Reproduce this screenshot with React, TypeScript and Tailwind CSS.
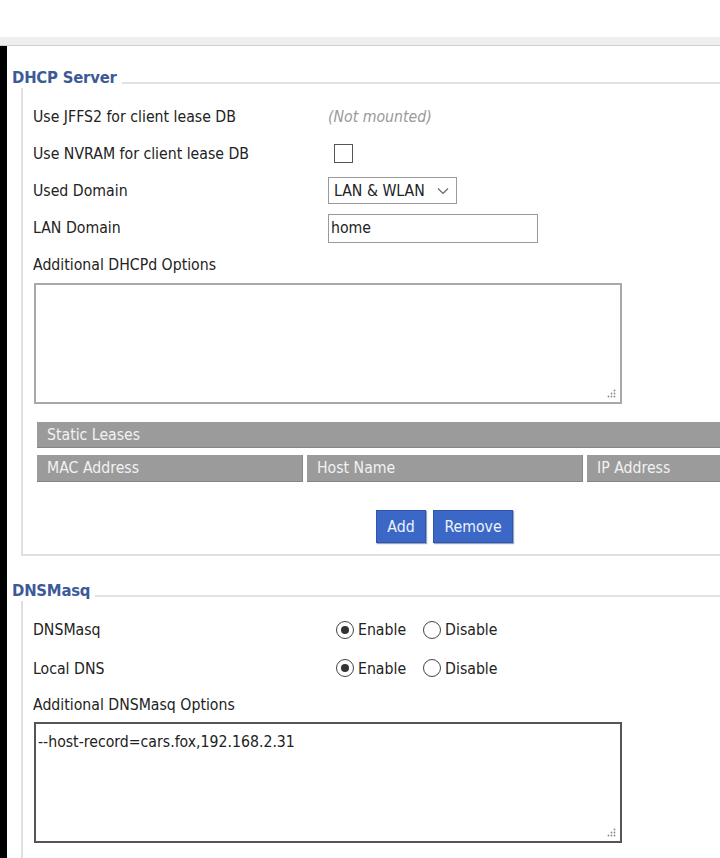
import React from "react";

const font = { fontFamily: '"DejaVu Sans Condensed", "Liberation Sans", sans-serif' };

const Grip: React.FC = () => (
	<svg
		className="absolute right-[4px] bottom-[4px]"
		width="9"
		height="9"
		viewBox="0 0 9 9"
	>
		{[
			[7.5, 1.5],
			[4.5, 4.5],
			[7.5, 4.5],
			[1.5, 7.5],
			[4.5, 7.5],
			[7.5, 7.5],
		].map(([cx, cy], i) => (
			<circle key={i} cx={cx} cy={cy} r="0.9" fill="#888" />
		))}
	</svg>
);

const Legend: React.FC<{ title: string }> = ({ title }) => (
	<div className="flex h-[18px]">
		<span className="text-[16.5px] font-bold leading-[18px] tracking-[-0.2px] text-[#3d5a98]">
			{title}
		</span>
		<div className="ml-[5px] mt-[13px] h-[2px] flex-1 bg-[#e2e2e2]"></div>
	</div>
);

const Row: React.FC<{ label: string; h: string; children?: React.ReactNode }> = ({
	label,
	h,
	children,
}) => (
	<div className={`flex items-center ${h}`}>
		<div className="w-[295px] shrink-0">{label}</div>
		<div className="flex items-center">{children}</div>
	</div>
);

const Radio: React.FC<{ on?: boolean; label: string }> = ({ on, label }) => (
	<div className="flex items-center gap-[4px]">
		<span className="flex h-[18px] w-[18px] items-center justify-center rounded-full border-[1.5px] border-[#444] bg-white">
			{on && <span className="h-[8px] w-[8px] rounded-full bg-[#333]"></span>}
		</span>
		<span>{label}</span>
	</div>
);

const App: React.FC = () => {
	return (
		<div
			className="h-[858px] w-[720px] overflow-hidden bg-white text-[15.7px] text-[#222]"
			style={font}
		>
			<div className="h-[37px]"></div>
			<div className="h-[9px] border-b border-[#cfcfcf] bg-[#efefef]"></div>

			<div className="flex">
				<div className="w-[7px] shrink-0 self-stretch bg-black"></div>
				<div className="flex-1 pl-[5px]">
					{/* DHCP Server */}
					<div className="mt-[23px]">
						<Legend title="DHCP Server" />
					</div>
					<div className="ml-[9px] mt-[1px] w-[820px] border-b-2 border-l-2 border-[#e0e0e0] pb-[11px] pl-[10px] pt-[10px]">
						<Row label="Use JFFS2 for client lease DB" h="h-[37px]">
							<span className="italic text-[#9a9a9a]">(Not mounted)</span>
						</Row>
						<Row label="Use NVRAM for client lease DB" h="h-[37px]">
							<span className="ml-[6px] h-[19px] w-[19px] border-[1.5px] border-[#555] bg-white"></span>
						</Row>
						<Row label="Used Domain" h="h-[37px]">
							<div className="flex h-[27px] w-[129px] items-center justify-between border border-[#9a9a9a] pl-[5px] pr-[7px]">
								<span>LAN &amp; WLAN</span>
								<svg width="12" height="8" viewBox="0 0 12 8">
									<polyline
										points="1,1.5 6,6.5 11,1.5"
										fill="none"
										stroke="#666"
										strokeWidth="1.2"
									/>
								</svg>
							</div>
						</Row>
						<Row label="LAN Domain" h="h-[38px]">
							<div className="flex h-[29px] w-[210px] items-center border-[1.5px] border-[#9a9a9a] pl-[2px]">
								home
							</div>
						</Row>
						<div className="flex h-[36px] items-center">Additional DHCPd Options</div>
						<div className="relative ml-[1px] h-[121px] w-[588px] border-2 border-[#a8a8a8] bg-white">
							<Grip />
						</div>

						{/* Static leases */}
						<div className="ml-[4px] mt-[18px] w-[815px]">
							<div className="flex h-[26px] items-center border-b border-[#858585] bg-[#9b9b9b] pl-[10px] text-[#f2f2f2]">
								Static Leases
							</div>
							<div className="mt-[7px] flex gap-[4px] text-[#f2f2f2]">
								<div className="flex h-[27px] w-[266px] items-center border-r border-b border-[#858585] bg-[#9b9b9b] pl-[10px]">
									MAC Address
								</div>
								<div className="flex h-[27px] w-[276px] items-center border-r border-b border-[#858585] bg-[#9b9b9b] pl-[10px]">
									Host Name
								</div>
								<div className="flex h-[27px] flex-1 items-center border-b border-[#858585] bg-[#9b9b9b] pl-[10px]">
									IP Address
								</div>
							</div>
							<div className="mt-[28px] flex justify-center gap-[7px] text-[#eef2fb]">
								<button className="h-[33px] w-[50px] border border-[#2f56aa] bg-[#3b68c6] shadow-[1px_1px_1px_#9aa6c0]">
									Add
								</button>
								<button className="h-[33px] w-[80px] border border-[#2f56aa] bg-[#3b68c6] shadow-[1px_1px_1px_#9aa6c0]">
									Remove
								</button>
							</div>
						</div>
					</div>

					{/* DNSMasq */}
					<div className="mt-[26px]">
						<Legend title="DNSMasq" />
					</div>
					<div className="ml-[9px] mt-[1px] w-[820px] border-l-2 border-[#e0e0e0] pb-[40px] pl-[10px] pt-[10px]">
						<Row label="DNSMasq" h="h-[38px]">
							<div className="ml-[8px] flex items-center gap-[17px]">
								<Radio on label="Enable" />
								<Radio label="Disable" />
							</div>
						</Row>
						<Row label="Local DNS" h="h-[39px]">
							<div className="ml-[8px] flex items-center gap-[17px]">
								<Radio on label="Enable" />
								<Radio label="Disable" />
							</div>
						</Row>
						<div className="flex h-[34px] items-center">Additional DNSMasq Options</div>
						<div className="relative ml-[1px] h-[121px] w-[588px] border-2 border-[#555] bg-white pl-[2px] pt-[6px]">
							--host-record=cars.fox,192.168.2.31
							<Grip />
						</div>
					</div>
				</div>
			</div>
		</div>
	);
};

export default App;
